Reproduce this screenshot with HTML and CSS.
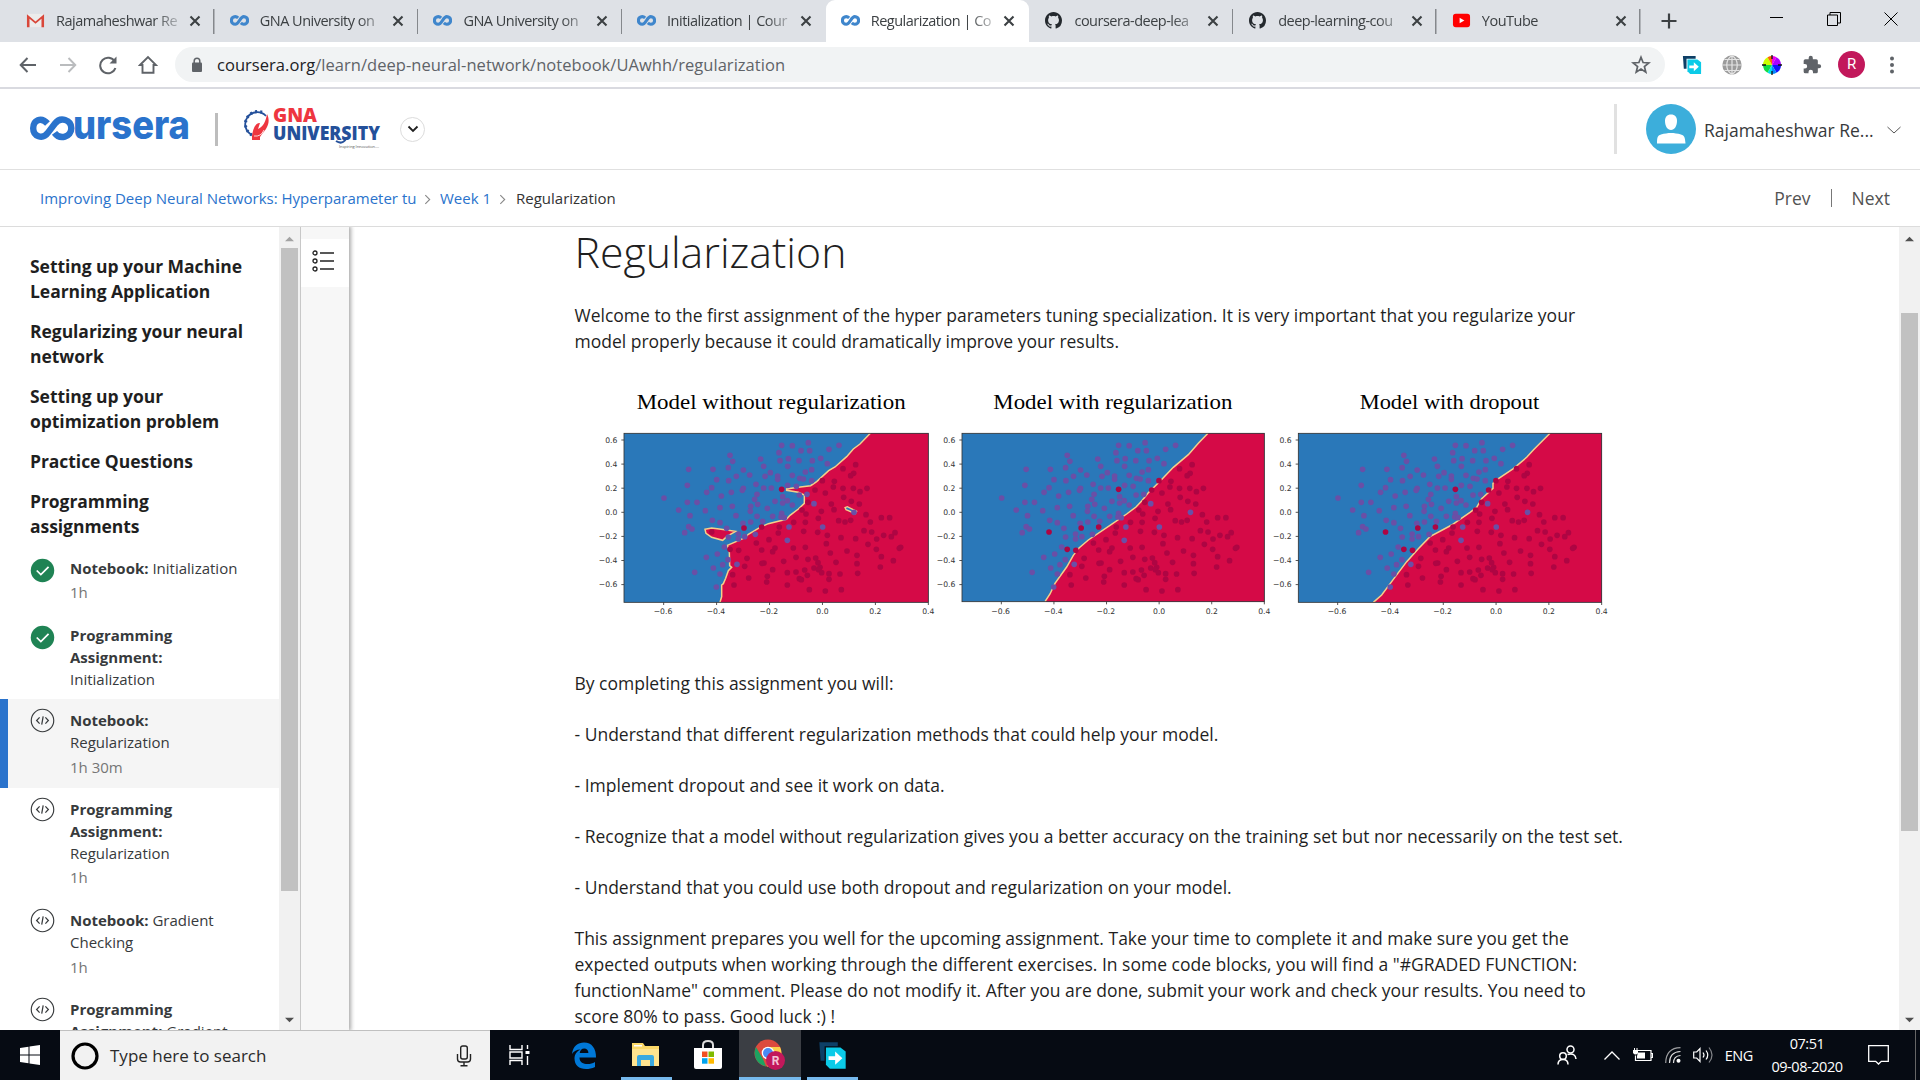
FILE: index.html
```html
<!DOCTYPE html>
<html lang="en">
<head>
<meta charset="utf-8">
<title>Regularization | Coursera</title>
<link rel="stylesheet" href="styles.css">
</head>
<body>
<svg width="0" height="0" class="defs">
  <symbol id="inf" viewBox="0 0 20 12"><path d="M8.6 3.2C7.6 2.3 6.6 1.9 5.5 1.9a4 4 0 0 0 0 8.1c4 0 5-8.1 9-8.1a4 4 0 0 1 0 8.1c-1.300 0-2.300-.6-3.100-1.400" fill="none" stroke="#3f86cc" stroke-width="3.300"/></symbol>
  <symbol id="x" viewBox="0 0 12 12"><path d="M1.500 1.500l9 9M10.500 1.500l-9 9" stroke="#3c4043" stroke-width="2.100"/></symbol>
  <symbol id="gh" viewBox="0 0 16 16"><path fill="#24292e" fill-rule="evenodd" d="M8 0C3.580 0 0 3.580 0 8c0 3.540 2.290 6.530 5.470 7.590.4.070.55-.17.55-.38 0-.19-.01-.82-.01-1.490-2.010.37-2.530-.49-2.690-.94-.09-.23-.48-.94-.82-1.130-.28-.15-.68-.52-.01-.53.63-.01 1.080.58 1.230.82.720 1.210 1.870.87 2.330.66.070-.52.280-.87.510-1.070-1.780-.2-3.640-.89-3.640-3.950 0-.87.310-1.590.820-2.150-.08-.2-.36-1.020.080-2.120 0 0 .67-.21 2.200.820.640-.18 1.320-.27 2-.27s1.360.09 2 .27c1.530-1.040 2.200-.82 2.200-.82.440 1.100.160 1.920.080 2.120.510.560.820 1.270.820 2.150 0 3.070-1.870 3.750-3.650 3.950.290.250.540.730.540 1.480 0 1.070-.01 1.930-.01 2.200 0 .21.150.46.550.38A8.010 8.010 0 0 0 16 8c0-4.420-3.580-8-8-8z"/></symbol>
  <symbol id="code" viewBox="0 0 26 26"><circle cx="13" cy="13" r="11.700" fill="none" stroke="#373a3c" stroke-width="1.200"/><path d="M10 9.800L6.900 13l3.100 3.200M16 9.800l3.100 3.200-3.100 3.200M13.700 8.800l-1.500 8.400" fill="none" stroke="#373a3c" stroke-width="1.300"/></symbol>
  <symbol id="done" viewBox="0 0 26 26"><circle cx="13" cy="13" r="12.200" fill="#1f8354"/><path d="M7 13l4.300 4.300 8-8" fill="none" stroke="#fff" stroke-width="1.800"/></symbol>
  <symbol id="share" viewBox="0 0 20 22"><path d="M0 1h14v3H4v11H1z" fill="#0d3f66"/><path d="M5 5h11l4 3v13H8l-3-3z" fill="#0bcbe8"/><path d="M7 11.500h5V8l5.500 5-5.500 5v-3.500H7z" fill="#fff"/></symbol>
  <symbol id="up" viewBox="0 0 10 6"><path d="M0 5.500L5 .5l5 5z"/></symbol>
</svg>

<header class="tabs">
  <div class="tab first"><svg class="fav" viewBox="0 0 20 16"><path d="M2 1h16v14H2z" fill="#ececec"/><path d="M1 15V1.500l9 7.500 9-7.500V15h-2.700V6.200L10 11.500 3.700 6.200V15z" fill="#d9473a"/></svg><span>Rajamaheshwar Re</span><svg class="x"><use href="#x"/></svg></div>
  <div class="tab"><svg class="fav"><use href="#inf"/></svg><span>GNA University on</span><svg class="x"><use href="#x"/></svg></div>
  <div class="tab"><svg class="fav"><use href="#inf"/></svg><span>GNA University on</span><svg class="x"><use href="#x"/></svg></div>
  <div class="tab nosep"><svg class="fav"><use href="#inf"/></svg><span>Initialization | Cour</span><svg class="x"><use href="#x"/></svg></div>
  <div class="tab active"><svg class="fav"><use href="#inf"/></svg><span>Regularization | Co</span><svg class="x"><use href="#x"/></svg></div>
  <div class="tab"><svg class="fav"><use href="#gh"/></svg><span>coursera-deep-lea</span><svg class="x"><use href="#x"/></svg></div>
  <div class="tab"><svg class="fav"><use href="#gh"/></svg><span>deep-learning-cou</span><svg class="x"><use href="#x"/></svg></div>
  <div class="tab"><svg class="fav" viewBox="0 0 20 16"><rect x="1" y="1" width="18" height="14" rx="3" fill="#f00"/><path d="M8 5l5 3-5 3z" fill="#fff"/></svg><span>YouTube</span><svg class="x"><use href="#x"/></svg></div>
  <svg class="plus" viewBox="0 0 16 16"><path d="M8 0.500v15M.5 8h15" stroke="#3c4043" stroke-width="2.200"/></svg>
  <div class="win">
    <svg viewBox="0 0 14 14"><path d="M0 5.500h13" stroke="#000"/></svg>
    <svg viewBox="0 0 14 14"><path d="M.5 3h10v10.500H.5zM3 3V.5h10.500V11H10.500" fill="none" stroke="#000"/></svg>
    <svg viewBox="0 0 14 14"><path d="M.5.500l13 13M13.500.500l-13 13" stroke="#000"/></svg>
  </div>
</header>

<nav class="toolbar">
  <svg class="t back" viewBox="0 0 20 20"><path d="M18 10H3M9.500 3L2.700 10l6.800 7" fill="none" stroke="#5f6368" stroke-width="2"/></svg>
  <svg class="t" viewBox="0 0 20 20"><path d="M2 10h15M10.500 3l6.800 7-6.800 7" fill="none" stroke="#babcbe" stroke-width="1.900"/></svg>
  <svg class="t" viewBox="0 0 20 20"><path d="M16.700 6.500A7.800 7.800 0 1 0 17.400 13" fill="none" stroke="#5f6368" stroke-width="2"/><path d="M18.500 1.500v7h-7z" fill="#5f6368"/></svg>
  <svg class="t" viewBox="0 0 20 20"><path d="M2 10L10 2l8 8h-2.500v7.800h-11V10z" fill="none" stroke="#5f6368" stroke-width="1.900"/></svg>
  <div class="omni">
    <svg class="lock" viewBox="0 0 12 16"><rect x="1" y="5.500" width="10" height="9.500" rx="1" fill="#5f6368"/><path d="M3.200 6V4a2.800 2.800 0 0 1 5.600 0v2" fill="none" stroke="#5f6368" stroke-width="1.500"/></svg>
    <span class="url"><b>coursera.org</b>/learn/deep-neural-network/notebook/UAwhh/regularization</span>
    <svg class="star" viewBox="0 0 20 20"><path d="M10 2.200l2.100 5.300 5.700.4-4.400 3.600 1.400 5.600-4.800-3.100-4.800 3.100 1.400-5.600L2.200 7.900l5.700-.4z" fill="none" stroke="#5f6368" stroke-width="1.700"/></svg>
  </div>
  <div class="exts">
    <svg><use href="#share"/></svg>
    <svg viewBox="0 0 20 20"><circle cx="10" cy="10" r="9.700" fill="#9b9b9b"/><path d="M10 0v20M0 10h20M2.500 4.500h15M2.500 15.500h15M10 .500C3 5 3 15 10 19.500M10 .500C17 5 17 15 10 19.500" fill="none" stroke="#e4e4e4" stroke-width="1.200"/></svg>
    <svg class="wheel" viewBox="0 0 20 20"><path d="M10 10L10 1A9 9 0 0 1 14.500 2.200z" fill="#e0e"/><path d="M10 10L14.500 2.200A9 9 0 0 1 19 10z" fill="#a0f"/><path d="M10 10H19A9 9 0 0 1 14.500 17.800z" fill="#11f"/><path d="M10 10L14.500 17.800A9 9 0 0 1 10 19z" fill="#08f"/><path d="M10 10V19A9 9 0 0 1 5.500 17.800z" fill="#0de"/><path d="M10 10L5.500 17.800A9 9 0 0 1 1 10z" fill="#1d4"/><path d="M10 10H1A9 9 0 0 1 5.500 2.200z" fill="#cf0"/><path d="M10 10L5.500 2.200A9 9 0 0 1 10 1z" fill="#f60"/><path d="M10 0v4M10 16v4M0 10h4M16 10h4" stroke="#111" stroke-width="1.300"/></svg>
    <svg viewBox="0 0 24 24"><path fill="#5f6368" d="M20.500 11H19V7a2 2 0 0 0-2-2h-4V3.500a2.500 2.500 0 0 0-5 0V5H4a2 2 0 0 0-2 2v3.800h1.500a2.700 2.700 0 0 1 0 5.400H2V20a2 2 0 0 0 2 2h3.800v-1.500a2.700 2.700 0 0 1 5.400 0V22H17a2 2 0 0 0 2-2v-4h1.500a2.500 2.500 0 0 0 0-5z"/></svg>
    <div class="me">R</div>
    <svg viewBox="0 0 20 20"><g fill="#5f6368"><circle cx="10" cy="3.500" r="2"/><circle cx="10" cy="10" r="2"/><circle cx="10" cy="16.500" r="2"/></g></svg>
  </div>
</nav>

<section class="brand">
  <svg class="coursera" viewBox="0 0 160 30">
    <path d="M17.500 9.200C11 2 3.200 6 3.200 14s9.300 11.800 14.800 4.300L25 9.200C30.500 2 41.300 5.500 41.300 14S30 26 24.500 18.500" transform="translate(0 .3)" fill="none" stroke="#2a73cc" stroke-width="6.400"/>
    <text x="43" y="25" textLength="117" lengthAdjust="spacingAndGlyphs">ursera</text>
  </svg>
  <i class="bar"></i>
  <svg class="gna" viewBox="0 0 138 42">
    <path d="M8 27A12 12 0 1 1 22 8" fill="none" stroke="#24509a" stroke-width="1.800"/><path d="M8 27A12 12 0 0 1 20 5" fill="none" stroke="#24509a" stroke-width="3" stroke-dasharray="2 3"/>
    <path d="M23 6c4 8 0 15-5 20l-2 3v3H8v-4c1-7 3-13 8-13l-2 6c5-2 8-8 9-15z" fill="#ee3640"/><path d="M10 28q7 1 10-6" stroke="#fff" stroke-width=".8" fill="none"/>
    <text class="g1" x="29" y="14" textLength="44" lengthAdjust="spacingAndGlyphs">GNA</text>
    <text class="g2" x="29" y="31.500" textLength="107" lengthAdjust="spacingAndGlyphs">UNIVERSITY</text>
    <path d="M92 33q6 4 10-2" fill="none" stroke="#24509a" stroke-width="2"/>
    <text class="g3" x="95" y="40" textLength="40">Inspiring Innovation....</text>
  </svg>
  <div class="drop"><svg viewBox="0 0 12 8"><path d="M1.500 1.500L6 6l4.500-4.500" fill="none" stroke="#1f1f1f" stroke-width="1.800"/></svg></div>
  <div class="user">
    <svg class="face" viewBox="0 0 50 50"><circle cx="25" cy="25" r="25" fill="#3caedb"/><path d="M25 10.500c4 0 6 2.500 6 6.500 0 5-2.500 9-6 9s-6-4-6-9c0-4 2-6.500 6-6.500zM11 39.500c0-7 1-8 4-9 7-2 13-2 20 0 3 1 4 2 4.500 9z" fill="#fff"/></svg>
    <span>Rajamaheshwar Re...</span>
    <svg class="v" viewBox="0 0 14 8"><path d="M.5 1L7 7l6.500-6" fill="none" stroke="#555"/></svg>
  </div>
</section>

<nav class="crumbs">
  <a>Improving Deep Neural Networks: Hyperparameter tu</a>
  <svg viewBox="0 0 6 10"><path d="M1 1l4 4-4 4" fill="none" stroke="#888"/></svg>
  <a class="wk">Week 1</a>
  <svg viewBox="0 0 6 10"><path d="M1 1l4 4-4 4" fill="none" stroke="#888"/></svg>
  <span class="here">Regularization</span>
  <div class="pn"><span>Prev</span><i></i><span>Next</span></div>
</nav>

<main class="main">
  <aside class="side">
    <h3>Setting up your Machine<br>Learning Application</h3>
    <h3>Regularizing your neural<br>network</h3>
    <h3>Setting up your<br>optimization problem</h3>
    <h3>Practice Questions</h3>
    <h3 class="last">Programming<br>assignments</h3>
    <div class="item ok"><svg><use href="#done"/></svg><div><b>Notebook:</b> Initialization<em class="near">1h</em></div></div>
    <div class="item ok nodur"><svg><use href="#done"/></svg><div><b>Programming<br>Assignment:</b><br>Initialization</div></div>
    <div class="item cur"><svg><use href="#code"/></svg><div><b>Notebook:</b><br>Regularization<em>1h 30m</em></div></div>
    <div class="item"><svg><use href="#code"/></svg><div><b>Programming<br>Assignment:</b><br>Regularization<em class="near">1h</em></div></div>
    <div class="item"><svg><use href="#code"/></svg><div><b>Notebook:</b> Gradient<br>Checking<em>1h</em></div></div>
    <div class="item"><svg><use href="#code"/></svg><div><b>Programming<br>Assignment:</b> Gradient</div></div>
  </aside>
  <div class="scroll left"><svg class="arr dim"><use href="#up"/></svg><i></i><svg class="arr dn"><use href="#up"/></svg></div>
  <div class="rail"><div><svg viewBox="0 0 22 22"><g fill="none" stroke="#222" stroke-width="1.300"><circle cx="3" cy="3" r="2"/><circle cx="3" cy="11" r="2"/><circle cx="3" cy="19" r="2"/><path d="M8 3h14M8 11h14M8 19h14"/></g></svg></div></div>
  <article class="doc">
    <h1>Regularization</h1>
    <p>Welcome to the first assignment of the hyper parameters tuning specialization. It is very important that you regularize your<br>model properly because it could dramatically improve your results.</p>
    <svg id="fig" class="fig" width="1060" height="260" viewBox="45 0 3180 780"></svg>
    <p>By completing this assignment you will:</p>
    <p>- Understand that different regularization methods that could help your model.</p>
    <p>- Implement dropout and see it work on data.</p>
    <p>- Recognize that a model without regularization gives you a better accuracy on the training set but nor necessarily on the test set.</p>
    <p>- Understand that you could use both dropout and regularization on your model.</p>
    <p>This assignment prepares you well for the upcoming assignment. Take your time to complete it and make sure you get the<br>expected outputs when working through the different exercises. In some code blocks, you will find a "#GRADED FUNCTION:<br>functionName" comment. Please do not modify it. After you are done, submit your work and check your results. You need to<br>score 80% to pass. Good luck :) !</p>
  </article>
  <div class="scroll right"><svg class="arr"><use href="#up"/></svg><i></i><svg class="arr dn"><use href="#up"/></svg></div>
</main>

<footer class="task">
  <div class="start"><svg width="20" height="20" viewBox="0 0 20 20"><path d="M0 3l8.500-1.200v7.700H0zM9.500 1.600L20 0v9.500H9.500zM0 10.500h8.500v7.800L0 17zM9.500 10.500H20V20L9.500 18.400z" fill="#fff"/></svg></div>
  <div class="search"><svg width="28" height="28" viewBox="0 0 28 28"><circle cx="14" cy="14" r="12" fill="none" stroke="#000" stroke-width="3.200"/></svg><span>Type here to search</span><svg width="16" height="22" viewBox="0 0 16 22"><rect x="4.700" y="1" width="6.600" height="13" rx="2" fill="none" stroke="#222" stroke-width="1.400"/><path d="M1.500 9v5q0 3 3 3h7q3 0 3-3V9M8 17v3.500M4.500 20.800h7" fill="none" stroke="#222" stroke-width="1.400"/></svg></div>
  <div class="app tv"><svg width="22" height="20" viewBox="0 0 22 20"><path d="M1 0v4.500h12V0M1 20v-4.500h12V20M1 7h12v6H1zM18.500 0v4M18.500 11v9" fill="none" stroke="#fff" stroke-width="1.400"/><path d="M16.500 6h4v3h-4z" fill="#fff"/></svg></div>
  <div class="app"><svg width="26" height="27" viewBox="0 0 26 27"><path d="M1 12C2 4 7 .500 13 .500c8 0 12 6 12 15H8.500c0 5 4 6.500 8 6.500 3 0 5-.6 7.500-2v5c-3 1.500-6 2-9 2C8 27 3.500 23 3.500 16.500 3.500 12.500 6 9 9.500 7.500 5.500 7.500 3 9 1 12zM8.700 11h8.700c0-3-1.700-4.500-4.200-4.500S9 8.500 8.700 11z" fill="#0078d7"/></svg></div>
  <div class="app ex"><svg width="28" height="24" viewBox="0 0 28 24"><path d="M0 0h11l2 3h14v20H0z" fill="#fbd968"/><path d="M2 2h8v1.500H2z" fill="#fff"/><path d="M0 6h27v17H0z" fill="#ffe48f"/><path d="M5 23V14q0-2 2-2h13q2 0 2 2v9h-4v-6H9v6z" fill="#3ba9e0"/></svg></div>
  <div class="app"><svg width="28" height="30" viewBox="0 0 28 30"><path d="M9 9V5q0-4 5-4t5 4v4" fill="none" stroke="#ddd" stroke-width="2"/><path d="M0 8h28v19q0 2-2 2H2q-2 0-2-2z" fill="#fff"/><path d="M8 11.500h5.500V17H8z" fill="#f25022"/><path d="M14.500 11.500H20V17h-5.500z" fill="#7fba00"/><path d="M8 18.200h5.500v5.500H8z" fill="#00a4ef"/><path d="M14.500 18.200H20v5.500h-5.500z" fill="#ffb900"/></svg></div>
  <div class="app ch"><svg width="32" height="32" viewBox="0 0 32 32"><circle cx="14" cy="14" r="13.500" fill="#dd4b3e"/><path d="M2 8l7 12 3 7.300A13.500 13.500 0 0 1 2 8z" fill="#1da261"/><path d="M14 8h12a13.500 13.500 0 0 1-13 19.500l7-10z" fill="#fdd14a"/><circle cx="14" cy="14" r="6.300" fill="#fff"/><circle cx="14" cy="14" r="5" fill="#4a8af4"/><circle cx="21.500" cy="21.500" r="9.500" fill="#c2185b"/><text x="21.500" y="25.500" text-anchor="middle">R</text></svg></div>
  <div class="app sh"><svg width="27" height="29"><use href="#share"/></svg></div>
  <div class="tray">
    <svg width="20" height="20" viewBox="0 0 20 20"><g fill="none" stroke="#fff" stroke-width="1.500"><circle cx="13.500" cy="4.500" r="3.500"/><circle cx="6" cy="11" r="3.300"/><path d="M1 19.500q0-5 5-5t5 5M10.500 9.500q8-2 8.500 4.500"/></g></svg>
    <svg class="c" width="16" height="9" viewBox="0 0 16 9"><path d="M.5 8.500L8 1l7.500 7.500" fill="none" stroke="#fff" stroke-width="1.300"/></svg>
    <svg width="20" height="14" viewBox="0 0 20 14"><path d="M4 2.500h14v10H2.500V7.500M18 5.500h1.500v4H18" fill="none" stroke="#fff" stroke-width="1.200"/><path d="M5 4.500h7v6H4V8zM0 2h5v3q-2.500 3-5 0zM1 0h1v2H1zM3.500 0h1v2h-1z" fill="#fff"/></svg>
    <svg width="16" height="16" viewBox="0 0 16 16"><g fill="none" stroke="#ddd" stroke-width="1.200"><path d="M.7 16Q1 1 15.500.7" opacity=".7"/><path d="M4.500 16Q4.500 5 15.500 4.500M8.500 16Q8.500 9 15.500 8.500"/></g><circle cx="13.500" cy="13.700" r="2" fill="#fff"/></svg>
    <svg width="20" height="18" viewBox="0 0 20 18"><g fill="none" stroke="#fff" stroke-width="1.200"><path d="M.7 6h3L7 2.500v13L3.700 12h-3zM10 6.500q2 2.500 0 5M13 4.500q3.500 4.500 0 9"/><path d="M16 1.500q6 7.500 0 15" opacity=".5"/></g></svg>
    <span class="eng">ENG</span>
    <div class="clock">07:51<br>09-08-2020</div>
    <svg class="n" width="21" height="20" viewBox="0 0 21 20"><path d="M.7.700h19.600v15.600h-7L10.500 19l-2.800-2.700h-7z" fill="none" stroke="#fff" stroke-width="1.300"/></svg>
    <i></i>
  </div>
</footer>
<script src="chart.js"></script>
</body>
</html>
```
FILE: styles.css
```css
* { box-sizing: border-box; }
body { margin: 0; width: 1920px; height: 1080px; overflow: hidden; display: flex; flex-direction: column; background: #fff; color: #1f1f1f; font-family: "Open Sans", "Noto Sans", sans-serif; }
svg { display: block; flex: none; }
.defs { position: absolute; }

.tabs { height: 42px; flex: none; background: #dee1e6; display: flex; padding-left: 11px; font: 15px "Open Sans", sans-serif; }
.tab { width: 203.700px; flex: none; display: flex; align-items: center; padding: 0 14px 1px 15px; background: linear-gradient(#85888c, #85888c) right 9px / 1.500px 25px no-repeat; }
.tab.nosep { background: none; }
.tab .fav { width: 19px; height: 17px; margin-right: 11px; }
.tab span { width: 123px; overflow: hidden; white-space: nowrap; font-size: 14.500px; letter-spacing: -.5px; color: #3c4043; -webkit-mask-image: linear-gradient(90deg, #000 80%, rgba(0,0,0,.25)); mask-image: linear-gradient(90deg, #000 80%, rgba(0,0,0,.25)); }
.tab .x { width: 12px; height: 12px; margin-left: auto; }
.tab.active { background: #fff; border-radius: 9px 9px 0 0; }
.plus { width: 16px; height: 16px; margin: 13px 0 0 20px; }
.win { margin-left: auto; display: flex; gap: 43px; padding: 12px 22px 0 0; }
.win svg { width: 14px; height: 14px; }

.toolbar { height: 47px; flex: none; display: flex; align-items: center; border-bottom: 2px solid #d9dae0; padding-left: 18px; gap: 20px; }
.toolbar .t { width: 20px; height: 20px; }
.omni { width: 1490px; height: 35px; background: #f1f3f4; border-radius: 18px; display: flex; align-items: center; padding: 0 14px 0 16px; margin-left: -3px; }
.lock { width: 12px; height: 16px; }
.url { margin-left: 14px; font-size: 16.500px; letter-spacing: .04px; color: #5f6368; white-space: nowrap; }
.url b { font-weight: 400; color: #202124; }
.star { width: 20px; height: 20px; margin-left: auto; }
.exts { display: flex; align-items: center; gap: 20px; margin-left: -3px; }
.exts svg { width: 20px; height: 20px; }
.me { width: 27px; height: 27px; margin: 0 -3px 0 -4px; border-radius: 50%; background: #c2185b; color: #fff; font: 15px/27px Roboto, sans-serif; text-align: center; }

.brand { height: 81px; flex: none; display: flex; align-items: center; border-bottom: 1px solid #e0e0e0; padding-left: 30px; }
.coursera { width: 160px; height: 30px; }
.coursera text { font: 800 40px Inter, sans-serif; fill: #2a73cc; }
.bar { width: 3px; height: 33px; background: #bdbdbd; margin-left: 25px; }
.gna { width: 138px; height: 42px; margin-left: 26px; }
.gna text { font-family: "Open Sans", sans-serif; font-weight: 800; font-size: 19px; }
.gna .g1 { fill: #ee3640; }
.gna .g2 { fill: #24509a; font-size: 20px; }
.gna .g3 { font-size: 4px; font-weight: 400; fill: #555; }
.drop { width: 25px; height: 25px; border: 1px solid #dcdcdc; border-radius: 50%; margin-left: 18px; display: flex; align-items: center; justify-content: center; }
.drop svg { width: 12px; height: 8px; }
.user { margin-left: auto; height: 50px; border-left: 3px solid #e1e1e1; display: flex; align-items: center; padding: 0 19px 0 29px; font-size: 17.500px; color: #373a3c; }
.face { width: 50px; height: 50px; }
.user span { width: 171px; margin: 2px 12px 0 8px; white-space: nowrap; }
.v { width: 14px; height: 8px; margin-top: 2px; }

.crumbs { height: 57px; flex: none; display: flex; align-items: center; border-bottom: 1px solid #dcdcdc; padding: 0 30px 0 40px; font-size: 15px; white-space: nowrap; color: #333; }
.crumbs a { width: 376px; color: #2a73cc; overflow: hidden; }
.crumbs .wk { width: 51px; }
.crumbs > svg { width: 7px; height: 11px; margin: 2px 9px 0 8px; }
.crumbs .here { margin-left: 1px; }
.pn { margin-left: auto; display: flex; align-items: center; font-size: 17.500px; color: #525252; }
.pn i { width: 1px; height: 18px; background: #777; margin: 0 20px; }

.main { height: 803px; flex: none; display: flex; }
.side { width: 279px; height: 803px; overflow: hidden; padding-top: 27px; }
.side h3 { margin: 0 0 15px 30px; font-size: 17.500px; line-height: 25px; font-weight: 700; white-space: nowrap; letter-spacing: -.05px; }
.side h3.last { margin-bottom: 8px; }
.item { display: flex; padding: 10px 10px 10px 30px; font-size: 15px; line-height: 22px; color: #373a3c; white-space: nowrap; }
.item > svg { width: 25px; height: 25px; margin: -1px 15px 0 0; }
.item.ok > svg { margin-top: 1px; }
.item b { font-weight: 700; }
.item em { display: block; font-style: normal; color: #757575; margin-top: 3px; }
.item em.near { margin: 2px 0 1px; }
.item.nodur { height: 85px; }
.item.cur { background: #f5f5f5; border-left: 8px solid #2a73cc; padding-left: 22px; }
.scroll { width: 21px; background: #f1f1f1; display: flex; flex-direction: column; align-items: center; padding: 9px 0 7px; }
.scroll i { width: 17px; background: #c1c1c1; }
.arr { width: 9px; height: 6px; fill: #505050; }
.arr.dim { fill: #a3a3a3; }
.arr.dn { transform: rotate(180deg); margin-top: auto; }
.left i { height: 643px; margin-top: 6px; }
.right i { height: 518px; margin-top: 71px; }
.rail { width: 49px; background: #f7f7f7; border-left: 1px solid #c8c8c8; padding-top: 12px; box-shadow: 1px 0 4px 1px #aaa; clip-path: inset(0 -6px 0 0); }
.rail div { height: 48px; background: #fff; display: flex; align-items: center; justify-content: center; padding-bottom: 5px; padding-right: 4px; }
.rail svg { width: 22px; height: 22px; }
.doc { flex: 1; padding-left: 225.500px; height: 803px; overflow: hidden; }
.doc h1 { margin: -6px 0 20px; font-weight: 300; font-size: 42.800px; line-height: 61px; }
.doc p { margin: 0 0 25px; font-size: 17.500px; line-height: 26px; white-space: nowrap; color: #1f1f1f; }
.doc p + svg { margin: -9px 0 40px; }
.fig .title { font: 66px "Liberation Serif", serif; fill: #000; }
.fig .tick { font: 23px "DejaVu Sans", sans-serif; fill: #333; }

.task { height: 50px; flex: none; background: #060b13; display: flex; color: #fff; }
.start { width: 60px; display: flex; align-items: center; justify-content: center; }
.search { width: 430px; background: #f2f2f2; border-top: 1px solid #c0c0c0; color: #2b2b2b; display: flex; align-items: center; padding: 0 18px 0 11px; font-size: 17px; }
.search span { margin: 0 auto 0 11px; }
.app { width: 62px; height: 50px; display: flex; align-items: center; justify-content: center; }
.app.tv { width: 63px; padding-right: 4px; }
.app.ex { background: linear-gradient(#76b9ed, #76b9ed) center bottom / 51px 3px no-repeat; }
.app.ch { background: #3b3e44; border-bottom: 3px solid #76b9ed; padding-top: 3px; }
.app.ch text { font: bold 12px Roboto, sans-serif; fill: #f3c4d6; }
.app.sh { background: linear-gradient(#76b9ed, #76b9ed) center bottom / 51px 3px no-repeat; }
.tray { margin-left: auto; display: flex; align-items: center; font-size: 14.500px; padding-right: 4px; }
.tray .c { margin: 0 13px 0 27px; }
.tray svg + svg { margin-right: 12px; }
.eng { margin-right: 15px; letter-spacing: -.4px; }
.clock { width: 78px; text-align: center; line-height: 23px; letter-spacing: -.45px; white-space: nowrap; }
.tray .n { margin: 0 0 0 22px; }
.tray i { width: 1px; height: 50px; background: #666; margin-left: 26px; }
```
FILE: chart.js
```js
// Sample points of the two classes, in the units of the first panel.
const purple = "665,226 697,227 745,218 723,242 749,242 657,248 807,238 837,226 510,256 518,274 602,267 660,272 685,266 717,272 757,272 782,265 802,281 386,298 459,298 505,293 550,300 611,289 683,289 569,315 529,319 470,329 506,332 631,308 615,319 653,318 653,328 697,316 736,306 755,299 719,325 730,327 755,332 588,343 382,346 455,353 550,355 547,361 611,354 634,354 440,367 514,367 484,378 591,373 584,388 593,403 668,380 645,394 668,399 682,392 697,405 683,346 709,349 718,375 741,373 762,401 312,384 356,420 382,397 411,397 390,437 436,422 480,413 517,409 572,409 571,424 622,415 528,437 591,439 638,439 665,430 663,441 673,443 457,451 480,458 572,456 549,460 608,454 386,470 396,477 374,488 500,475 687,471 682,511 788,471 882,427 505,501 535,492 535,507 554,500 586,493 493,531 472,552 439,562 504,569 488,584 460,594 404,607 480,612 469,651 531,583";
const red = "665,358 552,474 605,471 455,486 510,538 536,541 887,284 849,296 881,310 872,317 787,332 823,334 820,351 765,360 796,369 849,355 880,355 900,365 921,355 851,382 874,394 898,402 814,402 822,419 744,397 726,420 738,432 784,424 775,445 701,457 736,457 836,452 855,456 872,451 918,434 931,456 964,443 989,443 658,471 655,489 731,484 773,487 802,496 843,503 887,506 912,482 935,486 971,496 1005,488 994,500 950,507 924,523 627,509 589,519 605,540 645,534 638,545 700,534 736,532 799,521 811,549 861,543 891,556 949,538 964,560 1022,532 1018,535 1000,572 961,591 561,565 554,589 612,579 606,580 671,574 708,562 744,568 767,564 774,578 780,592 762,594 776,599 828,577 891,581 893,610 638,599 682,608 708,606 734,600 742,616 718,626 724,629 785,608 807,611 807,628 840,612 622,619 620,636 566,624 518,614 522,645 682,645 748,659 796,663 844,659";

const panels = [
  { title: "Model without regularization", tx: 230, tw: 807, dx: 0, left: 192, right: 1105, zero: 311, bottom: 697,
    edge: "931,190 900,222 880,237 860,260 825,291 806,302 770,335 752,347 715,352 680,357 680,361 715,367 733,375 733,400 715,417 690,436 679,448 625,461 600,472 565,493 555,503 530,514 502,526 508,545 509,587 515,592 505,602 497,625 490,641 485,645 485,680 480,697",
    extra: ["435,478 455,474 500,480 527,484 515,491 500,500 488,511 455,502 438,490"], hole: "855,413 862,410 890,424 886,431 858,419" },
  { title: "Model with regularization", tx: 160, tw: 717, dx: 1140, left: 66, right: 973, zero: 184, bottom: 695,
    edge: "804,190 775,220 745,254 700,292 660,334 625,368 605,393 588,411 560,432 510,466 445,510 417,534 400,556 380,591 345,640 330,672 315,695", extra: [] },
  { title: "Model with dropout", tx: 299, tw: 539, dx: 2100, left: 115, right: 1025, zero: 233, bottom: 697,
    edge: "870,190 820,240 800,262 760,296 712,328 699,340 699,355 665,386 650,412 630,427 575,465 510,500 475,536 440,575 400,628 365,675 340,697", extra: [] }
];

const minus = v => v.toFixed(1).replace("-", "\u2212");
let out = "";
for (const p of panels) {
  const unit = p.right - p.zero, scale = unit / 794, w = p.right - p.left, h = p.bottom - 190;
  out += `<g transform="translate(${p.dx} 0)"><text class="title" x="${p.tx}" y="118" textLength="${p.tw}" lengthAdjust="spacingAndGlyphs">${p.title}</text>`;
  out += `<rect x="${p.left}" y="190" width="${w}" height="${h}" fill="#2a78b9"/>`;
  out += `<polygon points="${p.edge} ${p.right},${p.bottom} ${p.right},190" fill="#d50a47"/>`;
  out += `<polyline points="${p.edge}" fill="none" stroke="#f5cf8a" stroke-width="4.500"/>`;
  for (const e of p.extra) out += `<polygon points="${e}" fill="#d50a47" stroke="#f5cf8a" stroke-width="4.500"/>`;
  if (p.hole) out += `<polygon points="${p.hole}" fill="#2a78b9" stroke="#f5cf8a" stroke-width="4"/>`;
  for (const [set, color] of [[purple, "#6a4fa6"], [red, "#ae0543"]])
    for (const s of set.split(" ")) {
      const [x, y] = s.split(",").map(Number);
      out += `<circle cx="${((x - 311) * scale + p.zero).toFixed(1)}" cy="${y}" r="8.500" fill="${color}"/>`;
    }
  out += `<rect x="${p.left}" y="190" width="${w}" height="${h}" fill="none" stroke="#333" stroke-width="2.500"/>`;
  for (let i = 0; i < 6; i++) {
    const x = p.zero + unit * i / 5;
    out += `<path d="M${x} ${p.bottom}v8" stroke="#333" stroke-width="2.500"/><text class="tick" text-anchor="middle" x="${x - (i < 3 ? 2 : 0)}" y="${p.bottom + 36}">${minus(-0.6 + i * 0.2 + 1e-9)}</text>`;
  }
  for (let i = 0; i < 7; i++) {
    const y = 210 + i * 72.3;
    out += `<path d="M${p.left} ${y}h-8" stroke="#333" stroke-width="2.500"/><text class="tick" text-anchor="end" x="${p.left - 20}" y="${y + 8}">${minus(0.6 - i * 0.2 + 1e-9)}</text>`;
  }
  out += "</g>";
}
document.getElementById("fig").innerHTML = out;
```
